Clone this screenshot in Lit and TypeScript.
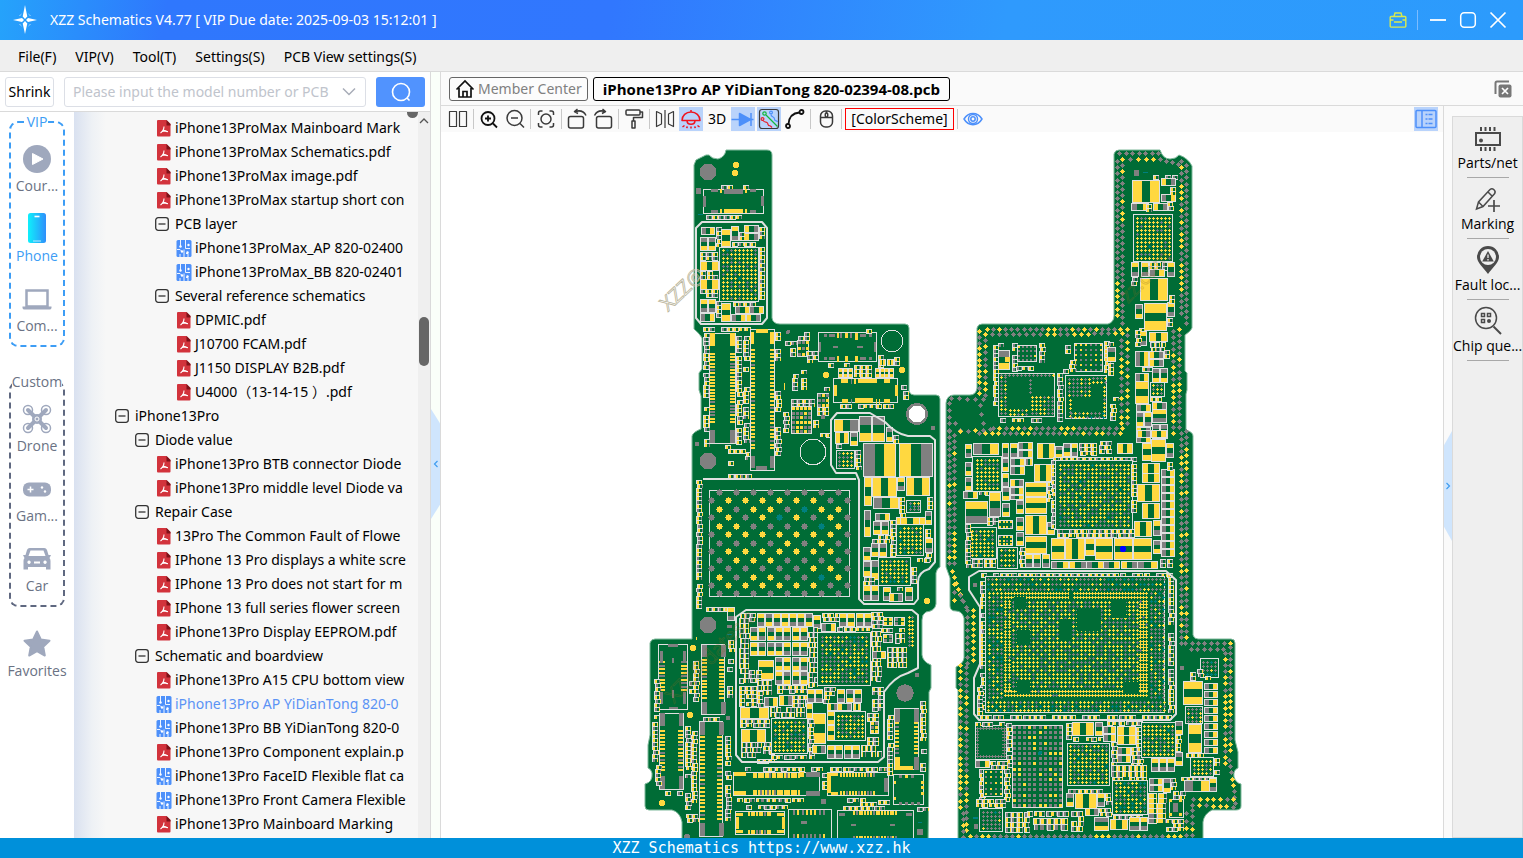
import { LitElement, html, svg, css, nothing } from "lit";
import { customElement, property, state } from "lit/decorators.js";
import { classMap } from "lit/directives/class-map.js";

/* ------------------------------------------------------------------ */
/* Board description                                                   */
/* Every block starts with "@ originX originY"; the entries after it   */
/* are measured in thirds of a board pixel from that origin.           */
/*   c x y r col          disc            O x y r      silk circle     */
/*   r x y w h col        pad             o x y w h    outlined body   */
/*   p x y w h dir cc [n dx dy]           two-pad part, repeated       */
/*   b x y w h nx ny gray [teal]          ball grid with body outline  */
/*   B x y w h nx ny gray [teal]          ball grid without outline    */
/*   q x y w h nx ny size gray            square pad grid              */
/*   k x y w h dir n len inset gray       connector with teeth         */
/*   s x y w h [cw ch]                    field of small passives      */
/*   e x1 y1 x2 y2 step gray              row of edge vias             */
/* ------------------------------------------------------------------ */
const LAYOUT = `
@ 640 140
c 205 97 25 g
c 289 76 9 y
c 286 100 9 y
r 168 144 15 18 g
s 243 135 38 12
s 306 135 16 12
o 190 148 184 75
r 213 148 22 10 g
r 240 148 6 12 y
r 252 148 57 14 g
r 315 148 6 12 y
r 330 148 18 10 g
r 190 168 8 33 g
r 363 168 10 30 g
r 213 210 22 9 g
r 240 207 7 12 y
r 252 207 57 12 y
r 315 207 6 12 y
r 330 210 18 9 g
s 198 225 125 12
r 174 223 14 4 t
p 183 262 40 22 h gy
p 180 290 20 40 v gy
p 204 290 22 40 v gy
s 228 262 12 60
p 243 267 28 52 v yy
p 274 258 20 42 v yg
p 313 256 42 22 h yg
p 313 280 42 22 h yg
s 298 275 14 28
s 356 262 14 32
s 275 305 85 12
b 240 325 110 157 9 13 20 4
s 180 335 55 28
p 180 363 54 28 h yy
s 180 393 55 22
p 180 416 54 30 h yy
s 180 448 55 28
p 180 478 20 40 v yg
p 204 478 22 40 v yg
p 180 520 42 24 h gy
s 228 482 12 60
p 243 488 28 54 v yy
s 275 487 90 12
p 284 498 42 22 h gy
p 328 498 42 22 h gy
p 274 522 42 20 h gy
p 318 522 42 22 h yg
s 356 320 14 160
s 190 562 135 14
k 208 578 80 332 v 22 16 60 25
r 210 580 15 38 y
r 270 580 15 38 y
r 210 870 15 40 g
r 270 870 15 40 g
s 190 580 20 190
s 190 802 20 116
s 288 588 20 330
s 308 588 20 80
s 308 680 20 8
s 308 740 20 100
s 308 850 20 60
s 316 935 12 32
s 236 915 30 12
s 264 928 50 12
k 330 568 74 426 v 28 13 60 15
r 348 568 36 11 y
r 332 576 10 36 y
r 390 576 12 36 y
r 332 948 12 36 g
r 390 948 12 36 g
r 348 978 34 12 g
s 405 576 12 20
s 405 628 12 38
s 405 752 20 60
s 405 850 20 96
s 430 816 18 56
c 445 577 6 g
s 434 604 28 14
s 472 577 40 20
q 472 600 37 50 3 3 9 55
s 450 625 18 26
s 498 634 28 40
s 456 690 20 62
s 484 690 22 62
r 432 728 3 20 y
o 535 577 178 90
r 552 582 9 10 g
r 567 582 18 10 g
r 591 578 5 16 y
r 600 578 6 14 g
r 615 578 8 16 y
r 630 578 6 14 g
r 645 578 8 20 y
r 660 582 18 10 g
r 686 582 8 10 g
r 537 606 6 30 g
r 702 606 6 30 g
r 580 618 14 6 g
r 652 618 18 6 g
r 552 652 9 10 g
r 567 652 18 10 g
r 591 648 5 18 y
r 615 648 8 18 y
r 645 648 8 18 y
r 660 652 18 10 g
r 686 652 8 10 g
O 755 603 34
s 678 568 18 10
s 564 668 18 12
s 610 668 18 12
s 714 645 18 34
p 718 658 18 18 h yy
p 742 658 18 18 h yy
s 762 652 12 20
c 559 706 9 y
c 787 690 9 y
p 594 685 12 28 v yy 3 15 0
s 642 676 60 34
p 706 685 12 28 v yy 4 14 0
o 580 715 195 76
r 582 735 9 33 y
r 765 735 9 33 y
r 602 717 22 12 y
r 654 717 56 12 y
r 732 717 18 12 y
r 632 717 4 14 g
r 642 717 5 16 y
r 606 776 18 13 y
r 645 774 54 15 y
r 732 776 18 13 y
r 632 778 4 12 g
r 708 776 4 14 y
r 718 776 4 14 y
s 600 793 166 12
s 780 722 12 26
s 790 752 12 28
q 530 760 36 44 3 3 9 55
s 553 742 18 16
s 452 778 66 18
q 454 798 62 84 5 6 9 45
s 520 840 16 40
s 540 880 26 16
s 530 800 38 22
c 550 830 7 g
O 519 936 40
c 832 823 33 g
c 832 823 25 x
c 205 964 25 g
c 172 912 7 g
c 880 865 7 g
s 264 962 12 16
s 264 1002 70 12
p 582 836 72 36 h yg
p 658 828 36 74 v gy
p 696 828 36 74 v gy
p 586 876 40 32 h yy
p 630 876 22 38 v gy
p 738 860 18 42 v gy
s 586 912 60 14
b 592 932 48 48 4 4 30
s 644 930 18 62
s 760 884 12 18
p 670 908 96 98 h gy
p 776 908 98 98 h yg
@ 640 470
p 672 22 20 84 v yy
p 696 22 72 56 h yy
p 772 22 20 40 v yg
p 797 22 70 54 h yy
p 698 80 74 34 h gy
o 797 90 44 38
B 800 93 38 30 3 3 55 10
s 778 80 12 70
s 860 82 14 36
p 673 120 18 78 v gy
p 704 128 42 20 h gy
p 767 140 86 20 h yy
p 780 140 58 20 h yy
p 698 152 22 40 v gy
p 722 152 22 40 v gy
s 750 150 10 108
b 772 166 76 86 6 7 18 5
p 856 124 18 40 v gy
s 854 166 20 38
p 856 204 20 42 v yg
s 856 250 18 22
p 668 230 20 40 v gy
s 670 212 24 14
s 696 194 50 20
p 692 218 20 40 v gy
p 716 218 20 40 v gy
p 668 274 20 46 v gy
p 692 270 20 56 v gy
p 668 344 22 44 v yg
p 692 344 22 44 v yg
b 717 265 90 78 7 6 18 5
s 814 264 44 14
s 814 280 22 70
s 670 320 42 22
p 728 352 20 38 v yg
p 748 368 40 24 h yg
p 794 352 22 38 v yg
s 752 350 36 16
s 264 12 72 10
s 168 18 14 400
s 180 412 80 10
c 862 394 9 y
o 208 61 424 321
c 205 466 25 g
p 260 412 20 38 v yg
r 260 464 14 9 g
r 262 492 14 3 t
r 168 502 3 9 y
c 160 535 9 y
c 151 736 9 y
c 67 1000 9 y
c 265 745 7 g
c 796 668 26 g
c 832 616 7 g
s 296 430 30 210 5 5
s 326 428 24 36
p 352 430 20 38 v yg
p 376 430 22 38 v gy
p 400 430 22 38 v yg
p 424 430 22 38 v yy
p 448 430 20 38 v yg
p 470 430 22 38 v yg
p 494 430 22 38 v gy
p 520 434 20 38 v yg
s 545 430 50 26
p 598 428 22 38 v yg
p 622 428 22 38 v yy
p 648 428 22 38 v yg
p 672 428 22 38 v yg
p 542 458 42 24 h gy
p 330 472 20 40 v gy
p 354 472 22 40 v yg
p 380 472 22 40 v gy
p 405 472 22 40 v yg
p 430 472 22 40 v yg
p 455 472 22 40 v yy
p 480 472 22 40 v yg
p 330 516 20 40 v yy
p 354 516 22 40 v gy
p 380 516 22 40 v gy
p 405 516 22 40 v gy
p 430 516 22 40 v yg
p 455 516 22 40 v yg
p 480 516 22 40 v yg
p 355 570 46 58 v yy
p 405 560 22 40 v gy
p 430 560 22 40 v yy
p 455 560 22 40 v gy
p 480 560 22 40 v yg
p 405 604 22 40 v yg
p 430 604 22 40 v gy
p 455 604 22 40 v yg
p 480 604 22 40 v gy
s 504 470 28 175 5 5
b 534 489 152 152 12 12 38 6
s 694 484 24 150 5 5
s 590 470 110 16
s 694 425 30 46
q 728 440 30 26 2 2 9 40
q 762 440 32 26 2 2 9 40
s 722 474 70 12
q 728 493 30 26 2 2 9 40
s 764 490 34 32 5 5
B 800 432 20 98 2 8 20
s 740 530 66 62 5 5
p 696 544 40 22 h gy
s 326 600 30 40
s 352 630 50 38 5 5
p 372 680 40 26 h gy
p 418 676 38 30 h yg
s 410 646 90 28
s 298 648 50 60
s 350 650 24 58
s 456 676 44 32
p 502 656 22 40 v yg
p 526 656 22 40 v yg
s 550 652 42 44
p 592 656 22 40 v yg
p 617 656 22 40 v gy
p 641 656 22 40 v yg
p 592 700 42 20 h yg
p 638 700 22 20 h yy
p 560 700 30 20 h yg
s 696 650 26 74
p 300 712 84 34 h yy
s 390 710 104 34 5 5
s 300 748 94 20
p 304 776 72 38 h yy
s 302 816 66 52 5 5
s 370 816 26 36
b 396 748 101 100 8 8 28 10
p 516 730 40 90 v yy
p 498 700 18 44 v yy
p 560 724 22 40 v yy
p 560 766 22 44 v yy
b 586 726 88 80 7 6 30 2
q 690 754 28 40 2 3 9 20
s 682 730 40 20
s 682 800 40 22
s 392 856 110 12
s 504 748 12 120
p 516 824 40 24 h yg
p 562 826 22 40 v yg
p 586 826 22 40 v yg
p 611 826 22 40 v yg
p 636 826 22 40 v yg
s 662 826 58 36 5 6
s 350 866 50 8
k 55 523 90 198 v 9 18 50 20
r 84 523 30 8 g
r 60 542 9 36 g
r 130 542 9 36 g
r 96 563 6 15 g
r 96 660 6 25 g
r 60 665 9 36 g
r 130 665 9 36 g
r 87 711 27 6 g
k 184 523 72 212 v 12 14 45 10
r 186 525 14 36 g
r 242 525 14 36 g
r 186 697 14 36 g
r 242 697 14 36 g
s 42 628 12 120
s 160 572 20 116
s 146 634 12 40
s 260 568 18 36
s 260 648 18 36
s 264 510 12 40
s 186 740 54 10
k 58 728 74 230 v 12 15 50 20
r 60 730 14 38 g
r 118 730 13 38 g
r 60 917 14 38 g
r 118 917 13 38 g
s 36 756 20 116
s 44 886 12 56
s 75 962 60 12
s 135 768 16 160
s 152 784 24 210
s 135 956 18 54
s 138 1032 38 28
k 178 753 73 349 v 22 14 46 12
r 180 756 14 38 g
r 236 756 14 38 g
r 180 1060 14 40 g
r 236 1060 14 40 g
s 256 798 16 72
s 254 874 26 10
s 256 890 16 40
s 256 946 16 110
s 316 892 240 12
s 570 892 172 12
s 542 908 12 50
k 279 905 262 71 h 20 15 60 10
r 281 906 36 13 y
r 281 962 36 13 y
r 480 905 12 16 y
r 498 905 42 14 g
r 498 962 42 14 g
k 560 906 186 73 h 12 13 38 30
r 562 910 11 60 y
r 574 908 22 9 y
r 574 966 22 9 y
r 732 924 12 42 g
k 763 714 74 186 v 9 13 42 25
r 765 716 14 38 g
r 822 716 14 38 g
r 765 862 14 38 y
r 822 862 14 38 g
r 780 888 40 12 y
s 740 722 18 90
s 740 820 18 90
s 840 694 18 120
s 840 824 18 24
s 840 878 18 28
o 760 912 94 94
r 778 916 9 9 g
r 796 916 9 9 y
r 814 916 9 9 g
r 778 996 9 9 g
r 796 996 9 9 g
r 814 996 9 9 g
r 832 996 9 9 g
r 761 932 7 9 y
r 761 980 7 9 y
r 842 932 9 9 y
r 842 948 9 9 y
r 842 966 9 9 y
s 292 984 192 16
r 543 987 15 15 g
s 620 984 54 16
s 714 990 28 12
s 318 1004 130 14
k 286 1023 150 71 h 9 12 38 15
r 288 1028 22 10 y
r 288 1042 10 36 y
r 412 1028 22 10 y
r 426 1042 9 36 y
r 288 1080 22 10 y
r 412 1080 22 10 y
k 445 1016 132 92 h 8 14 14 65
r 484 1052 17 9 g
k 592 1021 232 92 h 16 13 48 30
r 632 1062 15 7 g
r 750 1062 15 7 g
r 598 1030 18 8 g
r 798 1030 18 8 g
s 610 1008 120 12
s 656 996 46 10
s 832 1012 26 12
r 831 1076 18 18 g
r 834 1056 12 3 t
c 142 1100 9 g
@ 940 140
r 582 90 15 17 g
r 609 97 15 4 t
p 575 119 82 66 h yy
s 640 104 22 12
s 676 104 26 12
p 664 115 42 22 h yg
p 664 163 42 20 h gy
s 688 140 16 20
p 573 190 50 22 h gy
s 618 192 20 22
p 640 190 42 20 h yg
s 682 186 24 28
b 583 224 110 136 9 11 20 2
p 574 366 22 42 v yg
p 602 366 22 42 v yg
s 626 366 56 20
p 628 388 44 20 h gy
p 682 366 22 42 v yg
s 574 410 20 30
p 600 415 80 66 h yy
p 611 489 66 80 v yy
p 682 486 22 42 v yg
p 586 492 22 42 v gy
s 680 534 12 20
s 688 466 12 20
s 598 552 12 20
p 628 576 54 26 h yy
p 598 574 22 42 v yg
s 586 570 14 56
s 630 606 50 24 5 5
p 586 634 40 44 h gy
p 628 634 42 22 h yg
p 628 658 42 22 h yg
s 672 630 12 26
s 586 682 44 14
p 586 698 40 24 h gy
p 636 684 20 42 v gy
p 660 684 22 42 v gy
b 634 730 36 36 3 3 70
p 586 724 40 66 v yy
s 630 770 28 14
p 636 786 42 22 h yg
p 588 792 42 22 h gy
p 588 816 20 42 v gy
p 612 816 20 42 v yg
p 636 808 42 40 v yg
p 588 862 42 22 h yg
p 636 852 22 42 v gy
p 660 852 22 42 v gy
p 588 886 42 20 h gy
s 160 614 12 180
s 172 608 18 12
p 174 630 34 56 v gy
r 194 650 14 16 y
s 216 610 12 80
q 231 616 60 52 5 4 6 75
s 297 610 10 58
s 228 678 60 12
q 403 610 86 86 6 6 7 55
s 376 614 22 20
s 386 660 12 36
s 370 686 34 12
s 492 604 12 96
p 502 622 24 42 v gy
s 504 606 20 14
s 504 668 18 32
o 174 698 170 132
B 176 700 166 12 14 1 90
B 176 700 24 128 2 10 55
B 262 710 14 52 1 4 100
B 266 762 76 66 6 5 60
B 200 800 62 28 5 2 30
s 350 698 20 146
o 376 706 127 132
B 380 708 70 64 6 5 70
B 450 708 50 24 4 2 60
B 380 772 16 64 1 5 20
B 484 728 16 108 1 8 20
B 380 812 120 24 9 2 50 4
s 180 834 124 12
s 516 770 12 16
s 510 792 14 50
e 537 40 655 40 18 95
e 547 57 640 57 19 20
e 532 64 532 410 18 100
e 532 430 532 525 18 0
e 547 76 547 310 18 60
e 547 328 547 550 18 100
e 724 64 724 520 18 60
e 739 76 739 550 18 100
e 660 58 715 72 16 100
e 142 566 540 566 18 70
e 136 582 545 580 20 70
e 118 574 118 760 16 35
e 134 582 134 766 18 50
e 34 774 130 778 20 95
e 28 790 28 890 18 100
e 44 850 60 870 18 100
e 120 796 128 850 20 90
e 60 874 150 868 20 90
e 118 880 540 880 18 40
e 160 864 545 864 18 60
e 544 600 544 850 19 50
e 560 566 560 850 19 50
e 700 574 700 880 18 40
e 716 566 716 860 18 90
@ 940 430
e 28 4 28 400 18 70
e 43 14 43 400 18 70
e 724 10 724 640 18 60
e 739 4 739 620 18 70
e 36 424 66 510 18 30
e 42 440 42 510 18 40
e 60 496 78 530 18 95
e 82 540 82 700 18 100
e 100 540 100 690 18 20
e 60 706 60 1130 18 35
e 78 712 78 1200 18 60
e 68 1148 68 1220 18 80
e 736 638 870 640 18 90
e 752 656 850 658 18 90
e 870 650 870 960 18 60
e 854 668 854 1000 18 40
e 868 990 886 1120 18 60
e 760 1106 880 1106 20 50
e 756 1124 880 1130 20 80
e 756 1140 756 1216 18 80
e 738 1150 738 1216 18 80
e 90 1218 720 1218 18 70
p 98 38 76 32 h gy
p 74 42 18 40 v yg
p 186 38 18 42 v yg
p 210 38 20 42 v yg
p 234 36 42 22 h gy
p 234 60 42 20 h gy
p 290 40 50 44 h yy
p 346 48 20 34 v gy
p 370 38 20 38 v gy
p 394 38 18 38 v yg
s 416 38 48 36
s 478 34 36 36
p 532 38 44 30 h yy
p 590 0 40 22 h yg
p 634 0 44 22 h yy
p 606 40 26 52 v yy
p 634 28 42 66 v yy
p 678 38 20 42 v yg
b 98 80 80 100 6 8 18
p 76 96 18 40 v gy
p 76 140 18 40 v gy
p 186 84 18 40 v gy
p 186 128 18 40 v yg
p 210 84 42 20 h gy
p 254 84 22 20 h gy
p 210 108 42 24 h gy
p 282 102 50 50 h yy
p 210 146 38 20 h yg
p 210 170 38 20 h gy
p 70 184 42 22 h gy
s 116 184 26 16
p 76 212 66 66 v yg
p 146 186 34 72 v yg
p 186 172 20 40 v gy
p 186 218 20 40 v gy
p 210 194 38 12 h gy
s 142 262 30 22
p 228 210 20 40 v gy
p 255 156 62 42 v yy
p 255 202 62 48 v yy
p 255 256 62 56 h yy
p 255 318 62 50 v yy
s 320 156 12 60
p 322 276 20 36 v gy
s 338 80 245 14
s 334 90 14 200
b 348 92 224 200 18 16 35 3
s 574 90 14 160
s 350 296 224 18
p 606 98 52 30 h yy
p 606 130 52 28 h yy
p 592 162 66 52 h yy
p 606 220 52 46 h yy
p 582 272 52 46 h yy
p 638 270 20 44 v yg
p 662 118 40 22 h gy 11 0 24
s 680 96 24 18
q 174 270 46 28 4 2 7 30
b 88 294 78 88 6 7 18 6
q 174 314 46 32 4 3 7 25
b 174 354 54 56 4 4 30 12
s 74 282 10 130
p 228 262 20 40 v gy
p 228 306 20 40 v gy
s 94 388 78 28
s 238 352 12 60
p 256 372 22 40 v yg
p 280 372 22 40 v yg
p 305 372 22 40 v yg
p 334 324 38 64 v yy
p 376 324 56 64 h yy
p 434 324 26 50 v yy
p 466 324 52 64 v yy
p 522 324 54 64 v yy
p 580 324 54 64 v yy
p 638 330 20 40 v gy
p 334 394 50 20 h gy
p 386 394 50 20 h yg
p 438 394 50 20 h gy
p 490 394 48 20 h gy
p 542 394 48 20 h yg
p 592 394 60 20 h gy
s 660 388 40 28
c 549 357 9 b
c 106 466 7 g
s 124 428 570 12
s 120 440 14 410
s 110 770 24 84
s 684 440 14 410
s 120 854 570 12
o 136 438 540 410
B 138 440 536 42 45 3 55 12
B 138 482 50 322 4 27 50 14
B 624 482 52 322 4 27 50 14
B 138 806 536 38 45 3 30 8
B 190 484 432 24 48 2 4
B 190 508 24 280 2 28 8
B 214 508 380 270 32 22 40
B 594 508 28 280 3 28 6
B 190 778 432 24 48 2 4
r 222 500 36 32 e
r 410 534 72 68 e
r 514 508 44 56 e
r 358 568 38 66 e
r 232 600 38 42 e
r 230 752 40 36 e
r 548 756 48 34 e
r 386 484 12 30 e
c 727 715 7 g
b 782 686 48 50 4 4 45 35
s 750 726 18 20
s 772 716 12 20
s 796 738 18 10
p 730 752 56 70 v yy
p 792 760 38 18 h gy 9 0 24
b 738 830 46 46 4 4 45
p 744 882 40 84 v yy
s 738 968 60 12
b 754 984 64 50 5 4 40
s 822 984 10 50
s 722 1040 104 10
p 732 1050 74 34 h gy
p 808 1044 20 40 v yg
p 704 872 20 38 v gy
s 706 914 24 50
p 704 966 20 38 v gy
b 108 888 86 96 10 10 100
r 116 900 70 74 e
s 104 876 92 10
s 198 880 10 130
p 106 990 42 20 h gy
s 150 992 44 18
s 116 1018 12 90
q 130 1018 60 84 4 5 6 30
s 192 1018 14 90
s 108 1108 86 26
q 216 886 154 248 10 16 9 78
c 299 969 6 t
p 396 876 64 40 h yy
s 378 880 14 50
p 464 876 22 40 v gy
s 400 920 100 12
b 384 942 120 120 10 10 22 4
p 490 888 36 20 h gy
p 490 912 36 20 h gy
p 532 888 54 26 h yy
p 532 916 54 26 h yy
s 500 872 100 12
s 588 890 14 60
p 532 950 38 22 h gy
p 532 976 38 22 h gy
s 512 936 18 70
s 572 950 28 60
b 606 880 95 100 8 8 26 3
p 634 984 22 40 v yg
p 658 984 22 40 v yg
p 682 984 20 40 v yg
s 512 1006 100 46 6 6
b 520 1054 100 96 8 8 26 12
p 626 1044 38 18 h gy
p 626 1066 38 18 h gy
p 668 1044 20 42 v gy
s 690 1044 12 40
s 624 1088 58 90 9 5
o 686 1106 44 56
r 698 1118 16 26 g
r 688 1106 9 9 y
r 718 1106 9 9 y
r 688 1150 9 9 y
r 718 1150 9 9 y
s 700 1082 34 22
s 678 1166 50 30
p 378 1090 22 40 v gy
p 406 1088 64 44 h yy
p 472 1088 22 40 v yg
s 496 1090 18 40
s 382 1076 110 10
p 436 1134 40 22 h yg
s 478 1134 30 20
p 462 1160 42 38 v gy
p 510 1168 52 30 h yy
s 520 1154 80 12
p 566 1160 30 38 v yg
p 600 1160 22 40 v yg
b 120 1138 62 62 5 5 80 5
r 102 1182 12 15 g
r 98 1162 14 5 t
s 194 1146 66 56 6 5
s 262 1142 120 20 6 5
s 280 1164 110 38 7 6
s 392 1142 40 60 6 5
s 436 1180 22 22
`;

const OUTLINES = [
  "M694 165 696 160 702 157 706 155 709 155Q712 159 718 159 725 157 726 150L767 150Q772 150 772 155V318Q773 324 780 324H905Q909 324 909 328V391Q910 395 914 395H936Q940 395 940 399V567Q937 568 936 573V604Q935 611 926 612 922 614 922 620V655Q923 662 931 665V688L929 692V760L928 850H682V822Q680 812 672 810H649Q645 810 645 806V784Q653 782 652 773 651 769 648 768V745L650 735V643Q651 639 655 639H692V436Q693 432 701 429V396L699 390V373L702 369V338Q700 334 694 329Z",
  "M1114 154Q1115 150 1119 150H1160Q1163 159 1170 159 1176 159 1179 155 1188 158 1192 166V328Q1191 331 1185 335V371L1187 373V390L1186 394V430Q1193 432 1193 436V635Q1194 639 1198 639H1231Q1235 639 1235 643V740L1238 752V768Q1233 770 1234 777 1236 783 1241 784V806Q1241 810 1236 810H1212Q1204 814 1203 822V850H958V690L956 688V667Q963 664 964 658V618Q962 611 956 611 950 611 950 606V578L946 567V403Q947 395 954 395H970Q976 395 977 388V328Q978 324 982 324H1108Q1114 322 1114 316Z",
];

const SILK = [
  "M702 222H762L767 228V318L762 324H701L696 318V228Z",
  "M837 413H870L885 422Q896 434 908 436H930L935 440V562L929 569Q918 572 918 582V599L914 604H864L859 599V480L856 473H836L831 465V420Z",
  "M703 479H856",
  "M746 610H912L918 615V668L908 673Q894 677 884 692V757L878 762H742L736 755V617Z",
  "M979 571H1166L1176 580V714L1170 720H979L974 714V678L980 664V607L969 590V577Z",
];

type Ink = "y" | "g" | "t" | "w" | "e" | "x" | "b";
interface Shape { ink: Ink; d: string; }

let seed = 20;
const rnd = () => {
  seed = (seed + 0x6d2b79f5) | 0;
  let t = Math.imul(seed ^ (seed >>> 15), 1 | seed);
  t = (t + Math.imul(t ^ (t >>> 7), 61 | t)) ^ t;
  return ((t ^ (t >>> 14)) >>> 0) / 4294967296;
};

const rect = (x: number, y: number, w: number, h: number) => `M${x} ${y}h${w}v${h}h${-w}z`;

/* Even pitch where the grid allows it, so that balls line up on whole pixels. */
const ballAt = (i: number, count: number, span: number) => {
  const pitch = span / count;
  if (pitch > 3.6 && pitch < 4.6) return Math.round((span - 4 * (count - 1)) / 2) + i * 4;
  return Math.round((i + 0.5) * pitch);
};

function plotBoard(source: string): Shape[] {
  const out: Shape[] = [];
  const add = (ink: Ink, d: string) => {
    const last = out[out.length - 1];
    if (last && last.ink === ink) last.d += d;
    else out.push({ ink, d });
  };
  const batch = (bag: Record<string, string>) => {
    for (const ink of Object.keys(bag)) if (bag[ink]) add(ink as Ink, bag[ink]);
  };
  const frame = (x: number, y: number, w: number, h: number) => {
    add("w", rect(x, y, w, h));
    add("e", rect(x + 1, y + 1, w - 2, h - 2));
  };
  let ox = 0;
  let oy = 0;
  for (const line of source.trim().split("\n")) {
    const f = line.trim().split(" ");
    const kind = f[0];
    const n = f.slice(1).map(Number);
    if (kind === "@") {
      ox = n[0];
      oy = n[1];
      continue;
    }
    const x = ox + Math.round(n[0] / 3);
    const y = oy + Math.round(n[1] / 3);
    const w = Math.round(n[2] / 3);
    const h = Math.round(n[3] / 3);
    if (kind === "c") {
      const r = n[2] / 3;
      add(f[4] as Ink, `M${x - r} ${y}a${r} ${r} 0 1 0 ${2 * r} 0a${r} ${r} 0 1 0 ${-2 * r} 0z`);
    } else if (kind === "O") {
      const r = n[2] / 3;
      const q = r - 1;
      add("w", `M${x - r} ${y}a${r} ${r} 0 1 0 ${2 * r} 0a${r} ${r} 0 1 0 ${-2 * r} 0z`);
      add("e", `M${x - q} ${y}a${q} ${q} 0 1 0 ${2 * q} 0a${q} ${q} 0 1 0 ${-2 * q} 0z`);
    } else if (kind === "r") {
      add(f[5] as Ink, rect(x, y, w, h));
    } else if (kind === "o") {
      frame(x, y, w, h);
    } else if (kind === "p") {
      const count = n[6] || 1;
      for (let i = 0; i < count; i++) {
        const px = x + Math.round(((n[7] || 0) * i) / 3);
        const py = y + Math.round(((n[8] || 0) * i) / 3);
        const W = w + 1;
        const H = h + 1;
        frame(px, py, W, H);
        if (f[5] === "h") {
          const pad = Math.max(2, Math.round((W - 2) * 0.34));
          add(f[6][0] as Ink, rect(px + 1, py + 1, pad, H - 2));
          add(f[6][1] as Ink, rect(px + W - 1 - pad, py + 1, pad, H - 2));
        } else {
          const pad = Math.max(2, Math.round((H - 2) * 0.34));
          add(f[6][0] as Ink, rect(px + 1, py + 1, W - 2, pad));
          add(f[6][1] as Ink, rect(px + 1, py + H - 1 - pad, W - 2, pad));
        }
      }
    } else if (kind === "b" || kind === "B") {
      if (kind === "b") frame(x - 1, y - 1, w + 3, h + 3);
      const bag: Record<string, string> = { y: "", g: "", t: "" };
      for (let i = 0; i < n[4]; i++) {
        for (let j = 0; j < n[5]; j++) {
          const cx = x + ballAt(i, n[4], w);
          const cy = y + ballAt(j, n[5], h);
          const v = rnd() * 100;
          const ink = v < (n[7] || 0) ? "t" : v < (n[7] || 0) + n[6] ? "g" : "y";
          bag[ink] += `M${cx - 1} ${cy}h3v1h-3zM${cx} ${cy - 1}h1v3h-1z`;
        }
      }
      batch(bag);
    } else if (kind === "q") {
      frame(x, y, w, h);
      const bag: Record<string, string> = { y: "", g: "" };
      const s = Math.round(n[6] / 3);
      for (let i = 0; i < n[4]; i++) {
        for (let j = 0; j < n[5]; j++) {
          const cx = x + Math.round((i + 0.5) * (w / n[4]) - s / 2);
          const cy = y + Math.round((j + 0.5) * (h / n[5]) - s / 2);
          bag[rnd() * 100 < n[7] ? "g" : "y"] += rect(cx, cy, s, s);
        }
      }
      batch(bag);
    } else if (kind === "k") {
      frame(x, y, w, h);
      const len = Math.round(n[6] / 3);
      const inset = Math.round(n[7] / 3);
      const span = (f[5] === "v" ? h : w) - 2 * inset;
      const count = n[5];
      const bag: Record<string, string> = { y: "", g: "" };
      for (let i = 0; i < count; i++) {
        const at = Math.round((i * span) / count) + inset;
        for (const far of [false, true]) {
          const ink = rnd() * 100 < n[8] ? "g" : "y";
          bag[ink] += f[5] === "v"
            ? rect(far ? x + w - len - 1 : x + 1, y + at, len, 2)
            : rect(x + at, far ? y + h - len - 1 : y + 1, 2, len);
        }
      }
      batch(bag);
    } else if (kind === "s") {
      const cw = n[4] || 6;
      const ch = n[5] || 4;
      const bag: Record<string, string> = { w: "", e: "", y: "", g: "" };
      const cols = Math.max(1, Math.round(w / cw));
      const rows = Math.max(1, Math.round(h / ch));
      for (let i = 0; i < cols; i++) {
        for (let j = 0; j < rows; j++) {
          if (rnd() < 0.08) continue;
          const sx = x + i * cw + (rnd() < 0.2 ? 1 : 0);
          const sy = y + j * ch;
          bag.w += rect(sx, sy, cw, ch + (rnd() < 0.6 ? 1 : 0));
          bag.e += rect(sx + 1, sy + 1, cw - 1, ch - 1);
          const a = rnd() < 0.3 ? "g" : "y";
          const b = rnd() < 0.45 ? "g" : "y";
          bag[a] += rect(sx + 1, sy + 1, Math.max(1, cw - 4), ch - 1);
          bag[b] += rect(sx + cw - 1, sy + 1, 1, ch - 1);
        }
      }
      batch(bag);
    } else if (kind === "e") {
      const dx = n[2] - n[0];
      const dy = n[3] - n[1];
      const steps = Math.max(1, Math.floor(Math.hypot(dx, dy) / n[4]));
      const bag: Record<string, string> = { y: "", g: "" };
      for (let i = 0; i <= steps; i++) {
        const cx = ox + Math.round((n[0] + (dx * i) / steps) / 3);
        const cy = oy + Math.round((n[1] + (dy * i) / steps) / 3);
        bag[rnd() * 100 < n[5] ? "g" : "y"] +=
          `M${cx - 2} ${cy}h5v1h-5zM${cx} ${cy - 2}h1v5h-1zM${cx - 1} ${cy - 1}h3v3h-3z`;
      }
      batch(bag);
    }
  }
  return out;
}

/* NAND footprint: staggered round pads, one letter per pad. */
const NAND_ROWS = [
  "gggggggg", "gyyyyyygg", "ygyygtyy", "gygytygyg", "yyggggty", "gyyyyyyyg", "ggggygyg",
  "gyyyyyyyg", "gyyygggg", "ggggggyyg", "ygyyggty", "gyyyyyygg", "gggggggg",
];

function nandPads(): Shape[] {
  const bag: Record<string, string> = { y: "", g: "", t: "" };
  NAND_ROWS.forEach((row, j) => {
    const cy = 492 + Math.round(j * 8.45);
    [...row].forEach((ink, i) => {
      const cx = (j % 2 ? 711 : 719) + i * 17;
      bag[ink] += rect(cx - 2, cy - 2, 5, 5) + rect(cx - 3, cy, 7, 1) + rect(cx, cy - 3, 1, 7);
    });
  });
  return Object.keys(bag).map((ink) => ({ ink: ink as Ink, d: bag[ink] }));
}

@customElement("pcb-board")
class PcbBoard extends LitElement {
  static styles = css`
    :host { display: block; flex: none; }
    svg { display: block; shape-rendering: crispEdges; }
    .board { fill: #006c36; stroke: #7fb99b; stroke-width: 1; shape-rendering: auto; }
    .silk { fill: none; stroke: #e0e0e0; stroke-width: 2; stroke-linejoin: round; shape-rendering: auto; }
    .y { fill: #ffd840; }
    .g { fill: #808080; }
    .t { fill: #008080; }
    .w { fill: #e0e0e0; }
    .e { fill: #006c36; }
    .x { fill: #fff; }
    .b { fill: #00f; }
    .mark { font: 20px "Open Sans", sans-serif; fill: none; stroke: #b9b49a; stroke-width: 0.8; shape-rendering: auto; }
    .faint { opacity: 0.3; stroke: #8a6a20; }
  `;
  private shapes = [...plotBoard(LAYOUT), ...nandPads()];
  render() {
    return html`<svg width="1002" height="706" viewBox="441 132 1002 706" role="img" aria-label="Board view">
      ${OUTLINES.map((d) => svg`<path class="board" d=${d}></path>`)}
      <text class="mark" transform="translate(668 312) rotate(-43)">XZZ@</text>
      ${this.shapes.map((s) => svg`<path class=${s.ink} d=${s.d}></path>`)}
      ${SILK.map((d) => svg`<path class="silk" d=${d}></path>`)}
      <text class="mark faint" transform="translate(674 704) rotate(-46)">XZZ@dates.c</text>
      <text class="mark faint" transform="translate(1128 304) rotate(-46)">zz.com</text>
    </svg>`;
  }
}

/* ------------------------------------------------------------------ */
/* Icons                                                               */
/* ------------------------------------------------------------------ */
const line = (size: number, box: string, body: unknown, cls = "") =>
  html`<svg class="ico ${cls}" width=${size} height=${size} viewBox=${box} aria-hidden="true">${body}</svg>`;

const tool = (body: unknown, cls = "") => line(24, "0 0 24 24", body, `stroke ${cls}`);

const ICONS = {
  logo: line(30, "0 0 30 30", svg`<path fill="#fff" d="M15 0 17.300 11.500 15 14 12.700 11.500ZM15 29 17.300 18.500 15 16 12.700 18.500ZM3 15 12 13 14 15 12 17ZM27 15 18 13 16 15 18 17Z"/><path fill="none" stroke="#9fd4ff" d="M9.500 11a7 7 0 0 1 2-2M18.500 9a7 7 0 0 1 2 2M20.500 19a7 7 0 0 1-2 2M11.500 21a7 7 0 0 1-2-2"/>`),
  split: tool(svg`<path class="thin" d="M3.500 4.500h7v15h-7zM13.500 4.500h7v15h-7z"/>`),
  zoomIn: tool(svg`<circle cx="11" cy="11.500" r="6.500"/><path d="M8 11.500h6M11 8.500v6M16 16.500l4 4"/>`, "bold"),
  zoomOut: tool(svg`<circle cx="11.500" cy="11" r="7.500"/><path d="M8 11h7M17 16.500l4 4"/>`),
  fit: tool(svg`<circle cx="12" cy="12" r="5"/><path d="M4.500 8V6a2 2 0 0 1 2-2h2M15.500 4h2a2 2 0 0 1 2 2v2M19.500 16v2a2 2 0 0 1-2 2h-2M8.500 20h-2a2 2 0 0 1-2-2v-2"/>`),
  rotL: tool(svg`<rect x="3.500" y="9.500" width="15" height="11.500" rx="2"/><path d="M10 4.500c5-1.500 9 0 11 4M12.500 2 9.500 4.500l3.500 2"/>`),
  rotR: tool(svg`<rect x="5.500" y="9.500" width="15" height="11.500" rx="2"/><path d="M3.500 8.500c2-4 6-5.500 11-4M11.500 2l3 2.500-3.500 2"/>`),
  paint: tool(svg`<rect x="4" y="3" width="14" height="5" rx="1"/><path d="M18 5h2.500v5.500h-9v3M10 14h3v7h-3z"/>`),
  mirror: tool(svg`<path class="thin" d="M3.500 4.500 8.500 7v10l-5 2.500zM12 3v18M20.500 4.500 15.500 7v10l5 2.500z"/>`),
  lamp: tool(svg`<path d="M12 3v2M3 13.500C3 8.500 7 5 12 5s9 3.500 9 8.500zM8 13.500c0 5 8 5 8 0M5.500 18.500 3.500 20M12 19.500v2M18.500 18.500l2 1.500M8.500 19.500l-1 1.500M15.500 19.500l1 1.500"/>`, "red"),
  diode: tool(svg`<path d="M0.500 12.500h22M20 6v13"/><path class="fill" d="M8.500 6.500v12l11-6z"/>`, "azure"),
  nets: tool(svg`<rect x="2.500" y="2.500" width="19" height="19" rx="2.500"/><path class="c-green" d="M9 8l11.500 11.500"/><circle class="c-green" cx="7.500" cy="6.500" r="1.700"/><path class="c-azure" d="M14 7.500c0 3 3.500 1.500 3.500 4.500s3 1 3 3"/><circle class="c-azure" cx="14" cy="5.500" r="1.400"/><path class="c-red" d="M6 13.500c2 2.500 3.500 1 4.500 2.500s-.5 2.500 3 3l1.500 1.500"/><circle class="c-red" cx="5.500" cy="12" r="1.400"/>`, "slim"),
  curve: tool(svg`<circle cx="18.500" cy="5" r="2"/><circle cx="5" cy="19" r="2"/><path d="M16.500 5.500C10 6 6 10 5.500 17"/>`, "bold"),
  mouse: tool(svg`<rect x="6.500" y="4" width="12" height="16" rx="5"/><path d="M6.500 10.500h12M12.500 4v2.500"/><rect x="11.300" y="6" width="2.400" height="4" rx="1"/>`),
  eye: tool(svg`<path d="M3 12c4.500-7.500 13.500-7.500 18 0-4.500 7.500-13.500 7.500-18 0z"/><circle cx="12" cy="12" r="4.500"/><circle cx="12" cy="12" r="2.200"/>`, "azure"),
  panel: tool(svg`<rect x="2" y="3.500" width="20" height="17" rx="1"/><path d="M8 3.500v17M11.500 7.500h2M11.500 12h2M11.500 16.500h2M14.500 7.500h4M14.500 12h4M14.500 16.500h4"/>`, "azure"),
  home: line(20, "0 0 20 20", svg`<path fill="none" stroke="#111" stroke-width="1.700" d="M1.500 10.500 10 2l8.500 8.500M4 9v9h12V9M8 18v-5.500h4V18"/>`),
  pdf: line(15, "0 0 15 17", svg`<path fill="#d2333c" d="M1.500 0H10l4 4v11.500a1 1 0 0 1-1 1H1.500a1 1 0 0 1-1-1V1a1 1 0 0 1 1-1z"/><path fill="#7d1219" d="M10 0l4 4v1.500h-4z"/><path fill="none" stroke="#fff" stroke-width="1.100" d="M4 13c2-1.500 3.500-4 3.500-6.500M7 10c1.500 1.200 3 1.800 4.500 1.500M5 11.800c1.500-.8 3.200-1.100 5-.9"/>`),
  pcb: line(15, "0 0 15 17", svg`<rect x="0" y="0" width="15" height="17" rx="1.500" fill="#4d90fa"/><path fill="none" stroke="#fff" stroke-width="0.900" d="M4 0v6M0.500 9.500h3l2 2M9 0v8.500h4.500M7.500 9.500v7.500M3.500 17v-3M11.500 17v-3.500h-2"/><g fill="#fff"><circle cx="4" cy="6.500" r="1.200"/><circle cx="12" cy="5" r="1.200"/><circle cx="5.500" cy="11.500" r="1.200"/><circle cx="11" cy="12.500" r="1.200"/></g>`),
  fold: line(14, "0 0 14 14", svg`<rect x="0.700" y="0.700" width="12.600" height="12.600" rx="2.500" fill="none" stroke="#333" stroke-width="1.300"/><path stroke="#333" stroke-width="1.300" d="M3.500 7h7"/>`),
  course: line(30, "0 0 30 30", svg`<circle cx="15" cy="15" r="14" fill="#9fa8bd"/><path fill="#fff" stroke="#fff" stroke-linejoin="round" d="M10.500 9.500v11L21 15z"/>`),
  phone: line(32, "0 0 32 32", svg`<defs><linearGradient id="ph"><stop offset="0" stop-color="#0ff0fb"/><stop offset="1" stop-color="#2f8ffb"/></linearGradient></defs><rect x="7" y="1" width="18" height="30" rx="2.500" fill="url(#ph)"/><path stroke="#fff" stroke-width="1.600" d="M13.500 4.500h5"/><path stroke="#bfe9ff" d="M12 29h8"/>`),
  laptop: line(30, "0 0 30 30", svg`<path fill="none" stroke="#9fa8bd" stroke-width="2.500" d="M4.500 6.500h21v16h-21z"/><path fill="#9fa8bd" d="M0.500 22.500h29v1.500a2 2 0 0 1-2 1.500h-25a2 2 0 0 1-2-1.500z"/>`),
  drone: line(30, "0 0 30 30", svg`<g fill="none" stroke="#9fa8bd"><g stroke-width="1.500"><circle cx="6" cy="6" r="4.500"/><circle cx="24" cy="6" r="4.500"/><circle cx="6" cy="24" r="4.500"/><circle cx="24" cy="24" r="4.500"/></g><path stroke-width="4" stroke-linecap="round" d="M6 6l18 18M24 6 6 24"/></g><circle cx="15" cy="15" r="5" fill="#9fa8bd"/><circle cx="15" cy="15" r="2" fill="none" stroke="#fff"/>`),
  game: line(30, "0 0 30 30", svg`<rect x="1" y="8.500" width="28" height="14" rx="6" fill="#9fa8bd"/><path stroke="#fff" stroke-width="1.500" d="M5.500 15.500h6M8.500 12.500v6"/><circle cx="20" cy="13.500" r="1.200" fill="#fff"/><circle cx="23" cy="17.500" r="1.200" fill="#fff"/>`),
  car: line(30, "0 0 30 30", svg`<path fill="#9fa8bd" fill-rule="evenodd" d="M8 4h14a3 3 0 0 1 3 2l1.500 5H29l-1.500 3a4 4 0 0 1 1 3v8.500H24V23H6v2.500H1.500V17a4 4 0 0 1 1-3L1 11h2.500L5 6a3 3 0 0 1 3-2zm.5 2.500L6.500 12h17l-2-5.500zM7 16.500a1.700 1.700 0 1 0 .1 0zM23 16.500a1.700 1.700 0 1 0 .1 0zM12 17.500v2h6v-2z"/>`),
  star: line(30, "0 0 30 30", svg`<path fill="#9fa8bd" stroke="#9fa8bd" stroke-width="2" stroke-linejoin="round" d="M15 2.500l3.800 8 8.700 1.200-6.300 6 1.600 8.800L15 22.200 7.200 26.500l1.600-8.800-6.300-6 8.700-1.200z"/>`),
  chip: line(28, "0 0 28 28", svg`<path fill="none" stroke="#4a4a4a" stroke-width="2" d="M2 8h24v12H2z"/><path stroke="#4a4a4a" stroke-width="2" d="M7 2v4M11.500 2v4M16 2v4M20.500 2v4M7 22v4M11.500 22v4M16 22v4M20.500 22v4"/><circle cx="7" cy="15.500" r="2" fill="#4a4a4a"/>`),
  marking: line(28, "0 0 28 28", svg`<path fill="none" stroke="#4a4a4a" stroke-width="1.500" d="M2.500 23l2-7L16 3.500q2-1.500 4 .3t.5 4L9 20.500zM4.500 16l4.500 4.500M14 6l4.500 4.500"/><path stroke="#4a4a4a" stroke-width="1.700" d="M14 20h12M20 14v12"/>`),
  fault: line(30, "0 0 30 30", svg`<path fill="#4a4a4a" d="M15 1a11 11 0 0 1 11 11c0 5.500-6 10-11 17C10 22 4 17.500 4 12A11 11 0 0 1 15 1z"/><circle cx="15" cy="12" r="8" fill="#efefef"/><path fill="#4a4a4a" d="M15 6l5.800 10.500H9.200z"/><path stroke="#efefef" stroke-width="1.300" d="M15 9.500v3.500M15 14v1.500"/>`),
  query: line(30, "0 0 30 30", svg`<g fill="none" stroke="#4a4a4a" stroke-width="1.500"><circle cx="13" cy="12" r="10.500"/><path stroke-width="2" d="M20.500 20.500l7.500 7.500"/><path d="M8.500 7.500h3v3h-3zM14.500 7.500h3v3h-3zM8.500 13.500h3v3h-3z"/></g><circle cx="16" cy="15" r="2" fill="#4a4a4a"/>`),
  bag: line(20, "0 0 20 20", svg`<path fill="none" stroke="#d9ea4e" stroke-width="1.400" d="M3 6.500h14a.8.8 0 0 1 .8.800v9a.8.8 0 0 1-.8.800H3a.8.8 0 0 1-.8-.800v-9A.8.8 0 0 1 3 6.500zM6 6.500 7 3h6l1 3.500M2.500 10h3M14.500 10h3M6 12h8"/>`),
  min: line(20, "0 0 20 20", svg`<path stroke="#fff" stroke-width="1.800" d="M2 10h16"/>`),
  max: line(20, "0 0 20 20", svg`<rect x="2.700" y="2.700" width="14.600" height="14.600" rx="3.500" fill="none" stroke="#fff" stroke-width="1.500"/>`),
  close: line(20, "0 0 20 20", svg`<path stroke="#fff" stroke-width="1.700" d="M2.500 2.500l15 15M17.500 2.500l-15 15"/>`),
  closeAll: line(20, "0 0 20 20", svg`<path fill="none" stroke="#777" stroke-width="2" d="M2.500 15V4a1.500 1.500 0 0 1 1.500-1.500h12"/><rect x="5.500" y="5.500" width="13" height="13" rx="2" fill="#777"/><path stroke="#fff" stroke-width="1.700" d="M9 9l6 6M15 9l-6 6"/>`),
  chevron: line(14, "0 0 14 14", svg`<path fill="none" stroke="#a8adb8" stroke-width="1.500" d="M1 3.500l6 6 6-6"/>`),
  search: line(22, "0 0 22 22", svg`<circle cx="11" cy="11" r="8.500" fill="none" stroke="#fff" stroke-width="1.600"/><path stroke="#fff" stroke-width="1.600" d="M17 17l2.500 2.500"/>`),
  up: line(10, "0 0 10 10", svg`<path fill="none" stroke="#555" stroke-width="1.300" d="M1 7l4-4 4 4"/>`),
  prev: line(8, "0 0 8 8", svg`<path fill="none" stroke="#3f9df0" stroke-width="1.200" d="M5.500 1 2.500 4l3 3"/>`),
  next: line(8, "0 0 8 8", svg`<path fill="none" stroke="#3f9df0" stroke-width="1.200" d="M2.500 1l3 3-3 3"/>`),
};
type IconName = keyof typeof ICONS;

/* ------------------------------------------------------------------ */
/* Data                                                                */
/* ------------------------------------------------------------------ */
type Row = [depth: number, kind: "pdf" | "pcb" | "fold", label: string];
const TREE: Row[] = [
  [2, "pdf", "iPhone13ProMax Mainboard Mark"],
  [2, "pdf", "iPhone13ProMax Schematics.pdf"],
  [2, "pdf", "iPhone13ProMax image.pdf"],
  [2, "pdf", "iPhone13ProMax startup short con"],
  [2, "fold", "PCB layer"],
  [3, "pcb", "iPhone13ProMax_AP 820-02400"],
  [3, "pcb", "iPhone13ProMax_BB 820-02401"],
  [2, "fold", "Several reference schematics"],
  [3, "pdf", "DPMIC.pdf"],
  [3, "pdf", "J10700 FCAM.pdf"],
  [3, "pdf", "J1150 DISPLAY B2B.pdf"],
  [3, "pdf", "U4000（13-14-15 ）.pdf"],
  [0, "fold", "iPhone13Pro"],
  [1, "fold", "Diode value"],
  [2, "pdf", "iPhone13Pro BTB connector Diode"],
  [2, "pdf", "iPhone13Pro middle level Diode va"],
  [1, "fold", "Repair Case"],
  [2, "pdf", "13Pro The Common Fault of Flowe"],
  [2, "pdf", "IPhone 13 Pro displays a white scre"],
  [2, "pdf", "IPhone 13 Pro does not start for m"],
  [2, "pdf", "IPhone 13 full series flower screen"],
  [2, "pdf", "iPhone13Pro Display EEPROM.pdf"],
  [1, "fold", "Schematic and boardview"],
  [2, "pdf", "iPhone13Pro A15 CPU bottom view"],
  [2, "pcb", "iPhone13Pro AP YiDianTong 820-0"],
  [2, "pcb", "iPhone13Pro BB YiDianTong 820-0"],
  [2, "pdf", "iPhone13Pro Component explain.p"],
  [2, "pcb", "iPhone13Pro FaceID Flexible flat ca"],
  [2, "pcb", "iPhone13Pro Front Camera Flexible"],
  [2, "pdf", "iPhone13Pro Mainboard Marking"],
];
const SELECTED = 24;

const TOOLS: (IconName | "|" | "3D" | "scheme")[] = [
  "split", "|", "zoomIn", "zoomOut", "|", "fit", "|", "rotL", "rotR", "|", "paint", "|",
  "mirror", "lamp", "3D", "diode", "nets", "curve", "|", "mouse", "|", "scheme", "|", "eye",
];
const ACTIVE_TOOLS = ["lamp", "diode", "nets"];

const GROUPS: { name: string; items: [IconName, string][] }[] = [
  { name: "VIP", items: [["course", "Cour..."], ["phone", "Phone"], ["laptop", "Com..."]] },
  { name: "Custom", items: [["drone", "Drone"], ["game", "Gam..."], ["car", "Car"]] },
];

const DOCK: [IconName, string][] = [
  ["chip", "Parts/net"], ["marking", "Marking"], ["fault", "Fault loc..."], ["query", "Chip que..."],
];

@customElement("tree-row")
class TreeRow extends LitElement {
  @property({ type: Number }) depth = 0;
  @property() kind: "pdf" | "pcb" | "fold" = "pdf";
  @property() label = "";
  @property({ type: Boolean }) selected = false;
  static styles = css`
    :host { display: block; }
    .row { display: flex; align-items: center; gap: 3px; height: 24px; color: #000; white-space: nowrap; overflow: hidden; }
    .ico { flex: none; width: 16px; height: 17px; }
    .fold .ico { width: 14px; height: 14px; margin: 0 3px 0 1px; }
    .d0 { padding-left: 40px; }
    .d1 { padding-left: 60px; }
    .d2 { padding-left: 82px; }
    .d2.fold { padding-left: 80px; }
    .d3 { padding-left: 102px; }
    .on { color: #5b93f5; }
  `;
  render() {
    return html`<div class=${classMap({ row: true, ["d" + this.depth]: true, fold: this.kind === "fold", on: this.selected })}>
      ${ICONS[this.kind]}<span>${this.label}</span>
    </div>`;
  }
}

@customElement("app-root")
class AppRoot extends LitElement {
  @state() private section = "Phone";

  static styles = css`
    :host { display: flex; flex-direction: column; height: 100vh; overflow: hidden; background: #fff; color: #000; font: 14px/20px "Noto Sans", "Noto Sans CJK SC", sans-serif; }
    * { box-sizing: border-box; }
    button, input { font: inherit; color: inherit; padding: 0; margin: 0; border: 0; background: none; }
    .ico { display: block; flex: none; }

    .title { display: flex; align-items: center; height: 40px; flex: none; padding: 0 15px 0 10px; color: #fff; background: linear-gradient(100deg, #25a3fb 0, #2f77fd 11%, #3177fe 40%, #2f9afd 66%, #2c9bfc 100%); }
    .title h1 { flex: 1; margin: 0 0 0 10px; font-size: 14px; font-weight: 400; }
    .title .rule { width: 1px; height: 20px; margin: 0 10px 0 9px; background: #7cbcff; }
    .title .win { display: flex; gap: 10px; }

    .menu { display: flex; align-items: center; gap: 19px; height: 32px; flex: none; padding: 2px 18px 0; background: #efefef; border-bottom: 1px solid #dadada; }

    .body { display: flex; flex: 1; min-height: 0; }
    .left { display: flex; flex-direction: column; width: 431px; flex: none; border-right: 1px solid #dadada; }
    .find { display: flex; align-items: center; height: 40px; flex: none; padding: 0 5px; border-bottom: 1px solid #dadada; }
    .shrink { width: 49px; height: 30px; border: 1px solid #dcdfe6; border-radius: 3px; }
    .combo { display: flex; align-items: center; flex: 1; min-width: 0; height: 30px; margin: 0 10px; padding: 0 9px 0 8px; border: 1px solid #dcdfe6; border-radius: 3px; }
    .combo input { flex: 1; min-width: 0; margin-right: 4px; outline: 0; }
    .combo input::placeholder { color: #c0c4cc; opacity: 1; }
    .go { display: grid; place-items: center; width: 49px; height: 30px; border-radius: 3px; background: #5193fe; }

    .cols { display: flex; flex: 1; min-height: 0; }
    .nav { width: 74px; flex: none; overflow: hidden; color: #6a7284; font-family: "Open Sans", sans-serif; }
    .nav fieldset { margin: 0 9px 25px; padding: 9px 0 0; height: 235px; border: 2px dashed #5f6880; border-radius: 9px; min-width: 0; }
    .nav fieldset:last-of-type { margin-bottom: 4px; }
    .nav fieldset.vip { border-color: #3d9df5; }
    .nav legend { display: block; margin: 0 auto; padding: 0; line-height: 20px; }
    .vip legend { color: #3d9df5; }
    .nav button { display: flex; flex-direction: column; align-items: center; justify-content: flex-end; gap: 2px; width: 100%; height: 70px; line-height: 20px; white-space: nowrap; }
    .nav fieldset button:first-of-type { height: 55px; }
    .nav .on { color: #3d9df5; }
    .tree { position: relative; flex: 1; min-width: 0; padding: 4px 8px 0 0; overflow: hidden; background: linear-gradient(90deg, #d9e1f0, #eef1f5 18px, #f7f7f7 32px); }
    .knob { position: absolute; top: -5px; right: 0; width: 11px; height: 11px; border-radius: 50%; background: #666; }
    .bar { display: flex; flex-direction: column; align-items: center; width: 12px; flex: none; padding-top: 4px; background: #efefef; }
    .thumb { width: 10px; height: 49px; margin-top: 191px; border-radius: 5px; background: #666; }

    .split { display: flex; align-items: center; justify-content: flex-end; width: 9px; flex: none; padding-top: 18px; background: #fafff9; }
    .grip { display: grid; place-items: center; width: 9px; height: 110px; background: #cfe5fd; }
    .grip.in { clip-path: polygon(0 0, 100% 13%, 100% 87%, 0 100%); }
    .grip.out { clip-path: polygon(0 13%, 100% 0, 100% 100%, 0 87%); }

    .main { display: flex; flex-direction: column; flex: 1; min-width: 0; border-left: 1px solid #dadada; }
    .tabs { display: flex; align-items: center; gap: 5px; height: 34px; flex: none; padding: 0 10px 0 8px; background: #fafafa; border-bottom: 1px solid #dadada; }
    .tab { display: flex; align-items: center; gap: 3px; height: 24px; padding: 0 5px; border: 1px solid #666; border-radius: 3px; color: #808080; background: #fcfcfc; }
    .tab.cur { padding: 0 9px; border-color: #000; color: #000; font: 700 15px/20px "Open Sans", sans-serif; }
    .tabs .all { margin-left: auto; }

    .work { display: flex; flex: 1; min-height: 0; }
    .view { display: flex; flex-direction: column; flex: 1; min-width: 0; }
    .tools { display: flex; align-items: center; gap: 2px; height: 26px; flex: none; padding: 0 5px; background: #fafafa; }
    .tools button { display: grid; place-items: center; width: 24px; height: 24px; }
    .tools .on { background: #b9d3fb; }
    .tools .wide { width: 109px; height: 22px; border: 1px solid #f00; }
    .tools .last { margin-left: auto; }
    .sep { width: 3px; height: 20px; flex: none; background: linear-gradient(90deg, transparent 1px, #c8c8c8 1px, #c8c8c8 2px, transparent 2px); }
    .stroke { fill: none; stroke: #3a3a3a; stroke-width: 1.5; stroke-linejoin: round; }
    .stroke.bold { stroke: #111; stroke-width: 1.8; }
    .stroke.slim { stroke-width: 1.2; }
    .stroke.red { stroke: #f0141e; }
    .stroke.azure { stroke: #4d90fa; }
    .stroke .thin { stroke-width: 1.2; }
    .stroke .fill { fill: #4d90fa; }
    .c-green { stroke: #14b83c; }
    .c-azure { stroke: #4d90fa; }
    .c-red { stroke: #e8202a; }
    .canvas { display: flex; justify-content: center; flex: 1; min-height: 0; overflow: hidden; background: #fff; }

    .side { display: flex; width: 80px; flex: none; background: #fafafa; border-left: 1px solid #dadada; }
    .side .grip { align-self: center; width: 8px; margin-top: 28px; }
    .dock { flex: 1; margin: 10px 1px 0 0; border: 1px solid #dadada; background: #efefef; font-family: "Open Sans", sans-serif; }
    .dock button { display: flex; flex-direction: column; align-items: center; justify-content: flex-end; width: 100%; height: 61px; white-space: nowrap; }
    .dock button::after { content: ""; width: 42px; height: 1px; margin-top: 4px; background: #a8a8a8; }

    .foot { display: flex; align-items: center; justify-content: center; height: 20px; flex: none; color: #fff; background: #0090da; font: 15px/20px "DejaVu Sans Mono", monospace; }
  `;

  private navButton(icon: IconName, label: string) {
    return html`<button class=${classMap({ on: this.section === label })} @click=${() => (this.section = label)}>
      ${ICONS[icon]}<span>${label}</span>
    </button>`;
  }

  private toolButton(name: (typeof TOOLS)[number]) {
    if (name === "|") return html`<span class="sep"></span>`;
    if (name === "3D") return html`<button>3D</button>`;
    if (name === "scheme") return html`<button class="wide">[ColorScheme]</button>`;
    return html`<button class=${classMap({ on: ACTIVE_TOOLS.includes(name) })} aria-label=${name}>${ICONS[name]}</button>`;
  }

  render() {
    return html`
      <header class="title">
        ${ICONS.logo}
        <h1>XZZ Schematics V4.77 [ VIP Due date: 2025-09-03 15:12:01 ]</h1>
        <button aria-label="Toolbox">${ICONS.bag}</button>
        <span class="rule"></span>
        <div class="win">
          <button aria-label="Minimize">${ICONS.min}</button>
          <button aria-label="Maximize">${ICONS.max}</button>
          <button aria-label="Close">${ICONS.close}</button>
        </div>
      </header>
      <nav class="menu">
        ${["File(F)", "VIP(V)", "Tool(T)", "Settings(S)", "PCB View settings(S)"].map((m) => html`<button>${m}</button>`)}
      </nav>
      <div class="body">
        <aside class="left">
          <div class="find">
            <button class="shrink">Shrink</button>
            <label class="combo">
              <input aria-label="Model number" placeholder="Please input the model number or PCB" />
              ${ICONS.chevron}
            </label>
            <button class="go" aria-label="Search">${ICONS.search}</button>
          </div>
          <div class="cols">
            <div class="nav">
              ${GROUPS.map((g) => html`<fieldset class=${g.name === "VIP" ? "vip" : nothing}>
                <legend>${g.name}</legend>
                ${g.items.map(([icon, label]) => this.navButton(icon, label))}
              </fieldset>`)}
              ${this.navButton("star", "Favorites")}
            </div>
            <div class="tree">
              ${TREE.map(([depth, kind, label], i) => html`<tree-row .depth=${depth} .kind=${kind} .label=${label} ?selected=${i === SELECTED}></tree-row>`)}
              <span class="knob"></span>
            </div>
            <div class="bar">${ICONS.up}<div class="thumb"></div></div>
          </div>
        </aside>
        <div class="split"><button class="grip in" aria-label="Collapse left panel">${ICONS.prev}</button></div>
        <main class="main">
          <div class="tabs">
            <button class="tab">${ICONS.home}Member Center</button>
            <button class="tab cur">iPhone13Pro AP YiDianTong 820-02394-08.pcb</button>
            <button class="all" aria-label="Close all">${ICONS.closeAll}</button>
          </div>
          <div class="work">
            <section class="view">
              <div class="tools">
                ${TOOLS.map((t) => this.toolButton(t))}
                <button class="on last" aria-label="Panel">${ICONS.panel}</button>
              </div>
              <div class="canvas"><pcb-board></pcb-board></div>
            </section>
            <aside class="side">
              <button class="grip out" aria-label="Collapse right panel">${ICONS.next}</button>
              <div class="dock">
                ${DOCK.map(([icon, label]) => html`<button>${ICONS[icon]}<span>${label}</span></button>`)}
              </div>
            </aside>
          </div>
        </main>
      </div>
      <footer class="foot">XZZ Schematics https://www.xzz.hk</footer>
    `;
  }
}
